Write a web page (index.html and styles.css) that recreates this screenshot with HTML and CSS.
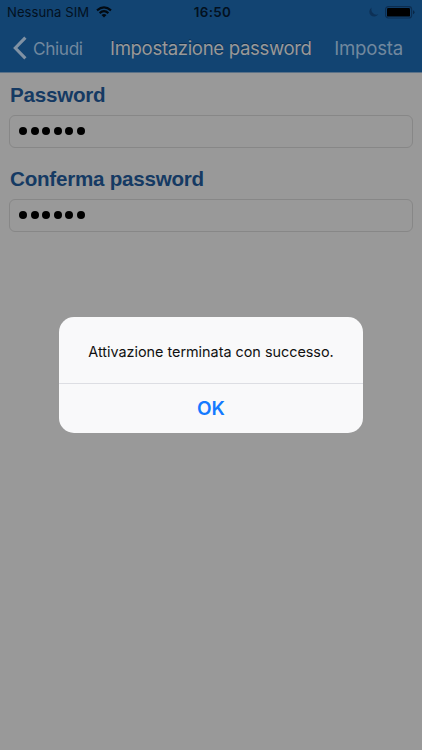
FILE: index.html
```html
<!DOCTYPE html>
<html lang="it">
<head>
<meta charset="utf-8">
<title>Impostazione password</title>
<link rel="stylesheet" href="styles.css">
</head>
<body>
<main class="screen">
  <header class="header">
    <div class="status">
      <div class="carrier"><span>Nessuna SIM</span>
        <svg class="wifi" width="16" height="12" viewBox="0 0 16 12" fill="none" stroke="#020a12" stroke-width="2.1"><path d="M1 4.4Q8-1.7 15 4.4M3.6 7.1Q8 3.3 12.4 7.1"/><path d="M5.5 9Q8 7 10.5 9L8 11.5Z" fill="#020a12" stroke="none"/></svg>
      </div>
      <time class="clock">16:50</time>
      <div class="indicators">
        <svg width="11" height="11" viewBox="0 0 11 11"><path d="M3.8.6A4.8 4.8 0 1 0 10.3 7.2A5 5 0 0 1 3.8.6Z" fill="#0d3157"/></svg>
        <svg width="30" height="13" viewBox="0 0 30 13"><rect x=".6" y=".6" width="26" height="11.4" rx="2.8" fill="none" stroke="#0c2d50" stroke-width="1.2"/><rect x="2" y="2" width="23" height="8.6" rx="1.2" fill="#000"/><path d="M28 4.3Q29.5 5 29.5 6.3T28 8.3Z" fill="#0a2745"/></svg>
      </div>
    </div>
    <nav class="nav">
      <a class="back"><svg width="14" height="24" viewBox="0 0 14 24" fill="none" stroke="currentColor" stroke-width="3.1"><path d="M12.4 1.6L2.3 12L12.4 22.4"/></svg><span>Chiudi</span></a>
      <h1 class="title">Impostazione password</h1>
      <a class="action">Imposta</a>
    </nav>
  </header>
  <form class="form">
    <div class="group"><label class="label">Password</label><div class="field"><i></i><i></i><i></i><i></i><i></i><i></i></div></div>
    <div class="group"><label class="label">Conferma password</label><div class="field"><i></i><i></i><i></i><i></i><i></i><i></i></div></div>
  </form>
  <section class="dialog" role="alertdialog">
    <p class="message">Attivazione terminata con successo.</p>
    <button class="ok" type="button">OK</button>
  </section>
</main>
</body>
</html>
```
FILE: styles.css
```css
* { box-sizing: border-box; }
body { margin: 0; font-family: Inter, "Liberation Sans", sans-serif; }
.screen { position: relative; width: 422px; height: 750px; background: #999; overflow: hidden; }
.header { height: 73px; background: #124472; border-bottom: 1px solid #5b7288; }
.status { height: 24px; display: grid; grid-template-columns: 1fr auto 1fr; align-items: center; padding: 0 7px; color: #03111f; }
.carrier { display: flex; align-items: center; gap: 7px; font-size: 13.1px; letter-spacing: .05px; white-space: nowrap; }
.clock { padding-left: 3px; font-size: 13.4px; font-weight: 600; letter-spacing: .3px; }
.indicators { display: flex; align-items: center; justify-content: flex-end; gap: 6px; }
.nav { height: 48px; display: grid; grid-template-columns: 97px 1fr auto; align-items: center; padding: 0 19px 0 13px; color: #71889e; white-space: nowrap; }
.back { display: flex; align-items: center; gap: 6px; font-size: 17.3px; letter-spacing: -.4px; }
.back svg { color: #8092a4; }
.title { margin: 0; font-size: 18.6px; font-weight: 400; letter-spacing: -.35px; color: #999; text-shadow: 0 -1px 0 #092d50; }
.action { text-align: right; font-size: 18.6px; letter-spacing: -.2px; }
.form { padding: 8px 9px; }
.group { height: 84px; }
.label { display: block; height: 34px; padding-left: 1px; font: bold 20.6px/27px "Liberation Sans", sans-serif; letter-spacing: -.24px; color: #153a63; white-space: nowrap; }
.field { display: flex; align-items: center; gap: 3.5px; height: 33px; padding: 0 0 1px 9px; border: 1px solid #878787; border-radius: 6px; }
.field i { width: 8px; height: 8px; border-radius: 50%; background: #000; }
.dialog { position: absolute; left: 59px; top: 317px; width: 304px; height: 116px; border-radius: 15px; background: #f9f9fa; overflow: hidden; }
.message { margin: 0; height: 66px; line-height: 69px; text-align: center; font-size: 14.4px; letter-spacing: -.01px; color: #111; white-space: nowrap; }
.ok { display: block; width: 100%; height: 50px; padding: 0; border: 0; border-top: 1px solid #dddee3; background: transparent; font: 600 19px/49px Inter, sans-serif; color: #147aff; }
```
